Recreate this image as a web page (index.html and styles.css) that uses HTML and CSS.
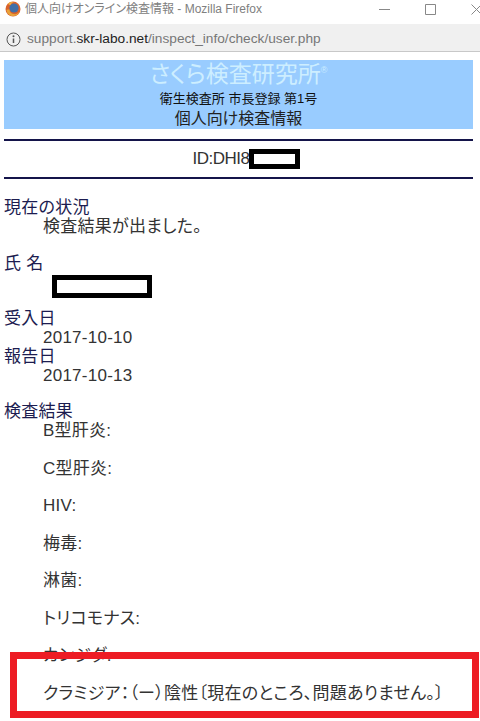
FILE: index.html
```html
<!DOCTYPE html>
<html lang="ja">
<head>
    <meta charset="UTF-8">
    <meta name="viewport" content="width=device-width, initial-scale=1.0">
    <title>個人向けオンライン検査情報</title>
    <link rel="stylesheet" href="styles.css">
</head>
<body>
    <div class="titlebar">
        <svg class="fx-icon" width="16" height="16" viewBox="0 0 16 16">
            <circle cx="8" cy="8" r="7.5" fill="#d9622b"/>
            <circle cx="9" cy="7" r="4.6" fill="#3f6fa8"/>
            <path d="M1.5 9C2 13 5 15 8 15c3.500 0 6-2 7-5-1.500 2.500-4 3.500-6.500 3C6 12.500 4.500 11 4.500 8.500 3 8.500 2 8.500 1.500 9z" fill="#e8a33a"/>
            <path d="M3 2.500C5 1 7 .8 9 1c-2 .6-3 1.600-3.500 3C4.500 4 3.500 3.500 3 2.500z" fill="#f0b040"/>
        </svg>
        <div class="window-title">個人向けオンライン検査情報 - Mozilla Firefox</div>
        <div class="window-buttons">
            <svg width="11" height="11" viewBox="0 0 11 11"><path d="M0 5.500h11" stroke="#888" fill="none"/></svg>
            <svg width="11" height="11" viewBox="0 0 11 11"><path d="M.5.500h10v10H.5z" stroke="#888" fill="none"/></svg>
            <svg width="11" height="11" viewBox="0 0 11 11"><path d="M.5.500l10 10M10.500.500l-10 10" stroke="#888" fill="none"/></svg>
        </div>
    </div>
    <div class="urlbar">
        <svg width="15" height="15" viewBox="0 0 15 15">
            <circle cx="7.500" cy="7.500" r="6.500" stroke="#555" fill="none"/>
            <path d="M7.500 6.500v4.500" stroke="#555" stroke-width="1.500"/>
            <circle cx="7.500" cy="4.300" r="1" fill="#555"/>
        </svg>
        <div class="url">support.<span class="host">skr-labo.net</span>/inspect_info/check/user.php</div>
    </div>

    <div class="page">
        <div class="banner">
            <div class="logo">さくら検査研究所<sup>®</sup></div>
            <div class="reg">衛生検査所 市長登録 第1号</div>
            <div class="banner-title">個人向け検査情報</div>
        </div>
        <div class="id-row">ID:DHI8<span class="redact redact-id"></span></div>

        <div class="label">現在の状況</div>
        <div class="value">検査結果が出ました。</div>

        <div class="label gap">氏 名</div>
        <div class="name-row"><span class="redact redact-name"></span></div>

        <div class="label">受入日</div>
        <div class="value">2017-10-10</div>
        <div class="label">報告日</div>
        <div class="value">2017-10-13</div>

        <div class="label gap">検査結果</div>
        <div class="results">
            <div>B型肝炎:</div>
            <div>C型肝炎:</div>
            <div>HIV:</div>
            <div>梅毒:</div>
            <div>淋菌:</div>
            <div>トリコモナス:</div>
            <div>カンジダ:</div>
            <div>クラミジア：（ー）陰性〔現在のところ、問題ありません。〕</div>
        </div>
    </div>

    <div class="highlight"></div>
</body>
</html>
```

FILE: styles.css
```css
body {
    margin: 0;
    height: 721px;
    overflow: hidden;
    position: relative;
    background-color: white;
    color: #333;
    font-family: "Liberation Sans", "Noto Sans CJK JP", sans-serif;
    font-size: 17px;
    font-feature-settings: "palt";
    line-height: 18.75px;
    letter-spacing: 0.25px;
}

.titlebar {
    height: 18px;
    padding: 0 0 6px 5px;
    display: flex;
    align-items: center;
    background-color: white;
    letter-spacing: 0;
}

.fx-icon {
    flex: none;
}

.window-title {
    margin-left: 4px;
    font-size: 12px;
    color: #808080;
}

.window-buttons {
    margin-left: auto;
    margin-right: -2px;
    display: flex;
    gap: 35px;
}

.urlbar {
    height: 24px;
    padding: 3px 0 0 6px;
    display: flex;
    align-items: center;
    background-color: #f0f0f0;
    border-bottom: 1px solid #c8c8c8;
    letter-spacing: 0;
}

.url {
    margin-left: 6px;
    font-size: 13.700px;
    color: #777;
}

.url .host {
    color: #222;
}

.page {
    padding: 8px 7px 0 4px;
}

.banner {
    height: 69px;
    background-color: #99ccff;
    text-align: center;
    color: #111;
    letter-spacing: 0;
}

.logo {
    font-size: 23px;
    line-height: 29px;
    color: #cdeeff;
}

.logo sup {
    font-size: 9px;
    line-height: 0;
    vertical-align: 9px;
}

.reg {
    font-size: 13px;
    line-height: 19px;
}

.banner-title {
    font-size: 16px;
    line-height: 21px;
    color: #222;
}

.id-row {
    margin-top: 10px;
    margin-bottom: 20px;
    height: 36px;
    padding-left: 16px;
    display: flex;
    align-items: center;
    justify-content: center;
    border-top: 2px solid #14144a;
    border-bottom: 2px solid #14144a;
    letter-spacing: -0.5px;
}

.redact {
    display: block;
    box-sizing: border-box;
    border: 5px solid black;
    background-color: white;
}

.redact-id {
    width: 51px;
    height: 20px;
}

.redact-name {
    width: 100px;
    height: 23px;
}

.label {
    color: #1c1c50;
}

.label.gap {
    margin-top: 18px;
}

.value {
    padding-left: 39px;
}

.name-row {
    padding-left: 48px;
    margin-top: 2px;
    margin-bottom: 12px;
}

.results {
    padding-left: 39px;
    display: flex;
    flex-direction: column;
    gap: 18.75px;
}

.highlight {
    position: absolute;
    left: 10px;
    top: 652px;
    width: 469px;
    height: 66px;
    box-sizing: border-box;
    border: 7px solid #ed1c24;
}
```
